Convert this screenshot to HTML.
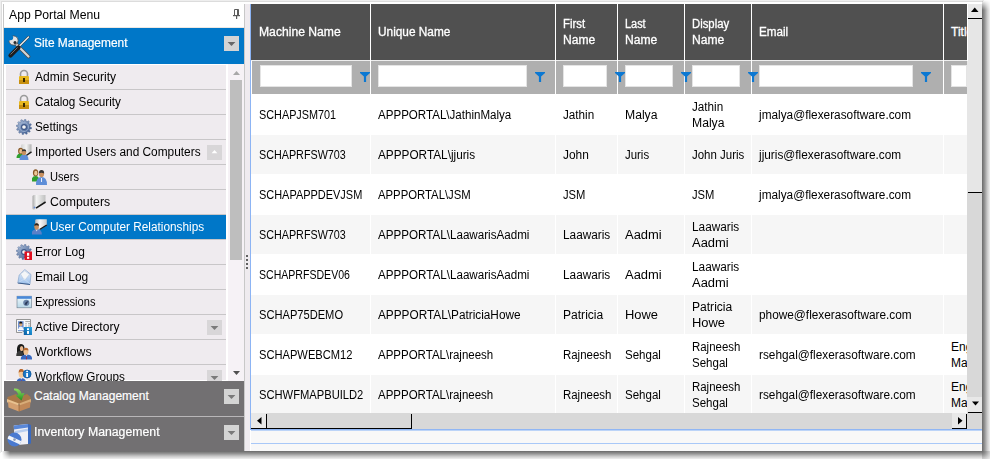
<!DOCTYPE html>
<html><head><meta charset="utf-8"><style>
html,body{margin:0;padding:0;}
body{width:990px;height:459px;position:relative;overflow:hidden;background:#fff;font-family:"Liberation Sans", sans-serif;font-size:12px;}
body div, body svg{position:absolute;}
.t{white-space:nowrap;line-height:16px;height:16px;}
</style></head><body>
<div style="left:0px;top:0px;width:984px;height:1px;background:#eeeeee;"></div>
<div style="left:0px;top:0px;width:1px;height:453px;background:#eeeeee;"></div>
<div style="left:1px;top:1px;width:982px;height:1px;background:#dcdcdc;"></div>
<div style="left:1px;top:1px;width:1px;height:451px;background:#dddddd;"></div>
<div style="left:982px;top:0px;width:8px;height:451px;background:linear-gradient(to right,#6a6a6a,#909090 30%,#c8c8c8 65%,#f0f0f0);-webkit-mask-image:linear-gradient(to bottom,transparent 0px,#000 10px)"></div>
<div style="left:0px;top:451px;width:982px;height:8px;background:linear-gradient(to bottom,#6a6a6a,#909090 30%,#c8c8c8 65%,#f0f0f0);-webkit-mask-image:linear-gradient(to right,transparent 2px,#000 10px)"></div>
<div style="left:982px;top:451px;width:8px;height:8px;background:radial-gradient(circle at 0 0,#6a6a6a,#909090 30%,#c8c8c8 65%,#f0f0f0 100%)"></div>
<div style="left:2px;top:2px;width:2px;height:449px;background:#ffffff;"></div>
<div style="left:3px;top:4px;width:1px;height:200px;background:linear-gradient(to bottom,#c4c4c4,#d8d8d8 50%,#ffffff)"></div>
<div style="left:4px;top:2px;width:240px;height:26px;background:#ffffff;"></div>
<div class="t" style="left:9px;top:7px;color:#000000;font-size:12px;font-weight:normal;transform:scaleX(1.0182);transform-origin:0 0;">App Portal Menu</div>
<svg style="left:232px;top:8px" width="10" height="12" viewBox="0 0 10 12"><path d="M2.5 1.5h4v6h-4z" fill="none" stroke="#5c5c5c" stroke-width="1"/><rect x="5" y="1.5" width="1.5" height="6" fill="#5c5c5c"/><rect x="1" y="7" width="7" height="1.2" fill="#5c5c5c"/><rect x="4" y="8" width="1.2" height="3" fill="#5c5c5c"/></svg>
<div style="left:4px;top:27px;width:240px;height:1px;background:#ece8e4;"></div>
<div style="left:4px;top:28px;width:240px;height:36px;background:#0077c8;"></div>
<div class="t" style="left:34px;top:35px;color:#ffffff;font-size:12px;font-weight:normal;transform:scaleX(0.9936);transform-origin:0 0;-webkit-text-stroke:0.2px #fff;">Site Management</div>
<svg style="left:7px;top:35px" width="24" height="24" viewBox="0 0 24 24"><line x1="9" y1="9" x2="21.5" y2="21.5" stroke="#4a4a4a" stroke-width="3.6" stroke-linecap="round"/><line x1="9" y1="9" x2="21.5" y2="21.5" stroke="#d4d4d4" stroke-width="2.2" stroke-linecap="round"/><line x1="21.5" y1="2" x2="12" y2="11.5" stroke="#3a3a3a" stroke-width="2.4" stroke-linecap="round"/><line x1="21.5" y1="2" x2="12" y2="11.5" stroke="#f0f0f0" stroke-width="1.3" stroke-linecap="round"/><line x1="11.5" y1="12.5" x2="3.5" y2="20.5" stroke="#1e1e1e" stroke-width="4.2" stroke-linecap="round"/><line x1="10.5" y1="12.5" x2="3.5" y2="19.5" stroke="#8a8a8a" stroke-width="0.8"/><circle cx="6.5" cy="5.5" r="4.6" fill="#e4e4e4" stroke="#505050" stroke-width="0.8"/><circle cx="3.6" cy="2.6" r="2.6" fill="#0077c8"/><path d="M1 5.5 L4.5 1.5" stroke="#0077c8" stroke-width="2.2"/><circle cx="8" cy="7.5" r="1.5" fill="#2a2a2a"/></svg>
<div style="left:224px;top:36px;width:15px;height:15px;background:#d4d4d4;"></div>
<svg style="left:224px;top:36px" width="15" height="15"><path d="M3.6 6H11.4L7.5 10.1z" fill="#686868"/></svg>
<div style="left:4px;top:64px;width:240px;height:317px;background:#ffffff;"></div>
<div style="left:6px;top:65px;width:220px;height:315px;background:#efebef;"></div>
<div style="left:6px;top:89px;width:220px;height:1px;background:#c8c6c8;"></div>
<svg style="left:16px;top:69px" width="16" height="16" viewBox="0 0 16 16"><rect x="4.5" y="1.5" width="7" height="8" rx="3.5" fill="none" stroke="#9a9a9a" stroke-width="1.6"/><rect x="3" y="7" width="10" height="8" rx="1" fill="#e8b820"/><rect x="3" y="11" width="10" height="4" fill="#c89010"/><rect x="7" y="9" width="2" height="4" fill="#3a2a00"/></svg>
<div class="t" style="left:35px;top:69px;color:#000000;font-size:12px;font-weight:normal;transform:scaleX(1.005);transform-origin:0 0;">Admin Security</div>
<div style="left:6px;top:114px;width:220px;height:1px;background:#c8c6c8;"></div>
<svg style="left:16px;top:94px" width="16" height="16" viewBox="0 0 16 16"><rect x="4.5" y="1.5" width="7" height="8" rx="3.5" fill="none" stroke="#9a9a9a" stroke-width="1.6"/><rect x="3" y="7" width="10" height="8" rx="1" fill="#e8b820"/><rect x="3" y="11" width="10" height="4" fill="#c89010"/><rect x="7" y="9" width="2" height="4" fill="#3a2a00"/></svg>
<div class="t" style="left:35px;top:94px;color:#000000;font-size:12px;font-weight:normal;transform:scaleX(0.9751);transform-origin:0 0;">Catalog Security</div>
<div style="left:6px;top:139px;width:220px;height:1px;background:#c8c6c8;"></div>
<svg style="left:16px;top:119px" width="16" height="16" viewBox="0 0 16 16"><defs><linearGradient id="gg1" x1="0" y1="0" x2="1" y2="1"><stop offset="0" stop-color="#b8c8e0"/><stop offset="1" stop-color="#2e4e86"/></linearGradient></defs><path d="M14.00 8.00L15.58 8.60L15.34 9.97L13.66 10.00L13.20 11.00L14.26 12.30L13.37 13.37L11.90 12.56L11.00 13.20L11.27 14.86L9.97 15.34L9.09 13.90L8.00 14.00L7.40 15.58L6.03 15.34L6.00 13.66L5.00 13.20L3.70 14.26L2.63 13.37L3.44 11.90L2.80 11.00L1.14 11.27L0.66 9.97L2.10 9.09L2.00 8.00L0.42 7.40L0.66 6.03L2.34 6.00L2.80 5.00L1.74 3.70L2.63 2.63L4.10 3.44L5.00 2.80L4.73 1.14L6.03 0.66L6.91 2.10L8.00 2.00L8.60 0.42L9.97 0.66L10.00 2.34L11.00 2.80L12.30 1.74L13.37 2.63L12.56 4.10L13.20 5.00L14.86 4.73L15.34 6.03L13.90 6.91Z" fill="url(#gg1)" stroke="#4a6490" stroke-width="0.5"/><circle cx="8" cy="8" r="4.6" fill="none" stroke="#9ab0d0" stroke-width="0.8"/><circle cx="8" cy="8" r="2.4" fill="#f4f4f4" stroke="#3a5486" stroke-width="1.1"/></svg>
<div class="t" style="left:35px;top:119px;color:#000000;font-size:12px;font-weight:normal;transform:scaleX(0.9811);transform-origin:0 0;">Settings</div>
<div style="left:6px;top:164px;width:220px;height:1px;background:#c8c6c8;"></div>
<svg style="left:16px;top:144px" width="16" height="16" viewBox="0 0 16 16"><defs><linearGradient id="gc1" x1="0" y1="0" x2="1" y2="0"><stop offset="0" stop-color="#d0d0d0"/><stop offset="0.5" stop-color="#f4f4f4"/><stop offset="1" stop-color="#b0b0b0"/></linearGradient></defs><path d="M5 1.5 Q5 0.3 6.5 0.3 L15.5 0.3 L15.5 8 L10 12 L5 12 Z" fill="url(#gc1)"/><path d="M9.5 12 L15.5 7.8" stroke="#1a1a1a" stroke-width="1.5"/><path d="M0.5 14 Q0.5 9.5 4.5 9.5 Q8 9.5 8 13 L8 14 Z" fill="#2ea02e"/><ellipse cx="4.6" cy="7" rx="2.5" ry="3.2" fill="#8a5a2a"/><ellipse cx="4.8" cy="7.2" rx="1.5" ry="2.2" fill="#e8c090"/><path d="M3.5 16 Q3.5 10.5 8 10.5 Q12.5 10.5 12.5 16 Z" fill="#5e8ed8"/><ellipse cx="8" cy="8.3" rx="2.3" ry="2.9" fill="#c89060"/><path d="M5.7 7.6 Q5.8 5.2 8 5.2 Q10.3 5.2 10.3 7.6 Q8 6.5 5.7 7.6Z" fill="#333"/></svg>
<div class="t" style="left:35px;top:144px;color:#000000;font-size:12px;font-weight:normal;transform:scaleX(0.9893);transform-origin:0 0;">Imported Users and Computers</div>
<div style="left:207px;top:145px;width:15px;height:15px;background:#d8d6d8;"></div>
<svg style="left:207px;top:145px" width="15" height="15"><path d="M4.6 8.2H10.4L7.5 4.9z" fill="#ffffff"/></svg>
<div style="left:6px;top:189px;width:220px;height:1px;background:#c8c6c8;"></div>
<svg style="left:32px;top:169px" width="16" height="16" viewBox="0 0 16 16"><path d="M-0.5 12.5 Q-0.5 7 3.5 7 Q7.5 7 7.5 12.5 Z" fill="#2ea02e"/><ellipse cx="3.6" cy="3.8" rx="2.7" ry="3.5" fill="#8a5a2a"/><ellipse cx="3.8" cy="4.2" rx="1.6" ry="2.4" fill="#ecc898"/><path d="M4 16 Q4 8 9.5 8 Q15 8 15 16 Z" fill="#5e8ed8"/><path d="M9.5 9 L9.5 13" stroke="#e8eef8" stroke-width="1"/><ellipse cx="9.5" cy="4.8" rx="2.6" ry="3.4" fill="#c89060"/><path d="M6.9 4.2 Q7 1 9.5 1 Q12.2 1 12.2 4.4 Q9.5 3 6.9 4.2Z" fill="#333"/></svg>
<div class="t" style="left:50px;top:169px;color:#000000;font-size:12px;font-weight:normal;transform:scaleX(0.927);transform-origin:0 0;">Users</div>
<div style="left:6px;top:214px;width:220px;height:1px;background:#c8c6c8;"></div>
<svg style="left:32px;top:194px" width="16" height="16" viewBox="0 0 16 16"><defs><linearGradient id="gc2" x1="0" y1="0" x2="1" y2="0"><stop offset="0" stop-color="#a8a8a8"/><stop offset="0.3" stop-color="#f4f4f4"/><stop offset="1" stop-color="#c0c0c0"/></linearGradient></defs><path d="M0.5 2.5 Q0.5 1 2 1 L13.5 1 L13.5 8.2 L3.5 15.5 L1.5 15.5 Q0.5 15.5 0.5 14.5 Z" fill="url(#gc2)"/><path d="M4 14.2 L13.6 8" stroke="#181818" stroke-width="1.6"/><circle cx="2.5" cy="13.5" r="0.9" fill="#6a90d8"/></svg>
<div class="t" style="left:50px;top:194px;color:#000000;font-size:12px;font-weight:normal;transform:scaleX(1.0244);transform-origin:0 0;">Computers</div>
<div style="left:6px;top:215px;width:220px;height:25px;background:#0077c8;"></div>
<div style="left:6px;top:239px;width:220px;height:1px;background:#c8c6c8;"></div>
<svg style="left:32px;top:219px" width="16" height="16" viewBox="0 0 16 16"><defs><linearGradient id="gc3" x1="0" y1="0" x2="1" y2="0"><stop offset="0" stop-color="#b8b8b8"/><stop offset="0.4" stop-color="#f8f8f8"/><stop offset="1" stop-color="#c8c8c8"/></linearGradient></defs><path d="M3.2 1.5 Q3.2 0.2 4.5 0.2 L14.8 0.2 L14.8 6.3 L8 10.8 L3.2 10.8 Z" fill="url(#gc3)"/><path d="M7.6 10.5 L14.8 6" stroke="#151515" stroke-width="1.4"/><path d="M-0.5 15.5 Q-0.5 10.2 4.7 10.2 Q9.9 10.2 9.9 15.5Z" fill="#5a80c8"/><path d="M3.8 10.4 L4.7 12.5 L5.6 10.4Z" fill="#e8eef8"/><ellipse cx="4.6" cy="7.5" rx="2.3" ry="3.2" fill="#c89060"/><path d="M2.3 6.8 Q2.3 4.2 4.6 4.2 Q6.9 4.2 6.9 6.8 Q4.6 5.6 2.3 6.8Z" fill="#222"/></svg>
<div class="t" style="left:50px;top:219px;color:#ffffff;font-size:12px;font-weight:normal;transform:scaleX(0.9832);transform-origin:0 0;">User Computer Relationships</div>
<div style="left:6px;top:264px;width:220px;height:1px;background:#c8c6c8;"></div>
<svg style="left:16px;top:244px" width="16" height="16" viewBox="0 0 16 16"><defs><linearGradient id="gg2" x1="0" y1="0" x2="1" y2="1"><stop offset="0" stop-color="#b8c8e0"/><stop offset="1" stop-color="#2e4e86"/></linearGradient></defs><path d="M14.00 8.00L15.58 8.60L15.34 9.97L13.66 10.00L13.20 11.00L14.26 12.30L13.37 13.37L11.90 12.56L11.00 13.20L11.27 14.86L9.97 15.34L9.09 13.90L8.00 14.00L7.40 15.58L6.03 15.34L6.00 13.66L5.00 13.20L3.70 14.26L2.63 13.37L3.44 11.90L2.80 11.00L1.14 11.27L0.66 9.97L2.10 9.09L2.00 8.00L0.42 7.40L0.66 6.03L2.34 6.00L2.80 5.00L1.74 3.70L2.63 2.63L4.10 3.44L5.00 2.80L4.73 1.14L6.03 0.66L6.91 2.10L8.00 2.00L8.60 0.42L9.97 0.66L10.00 2.34L11.00 2.80L12.30 1.74L13.37 2.63L12.56 4.10L13.20 5.00L14.86 4.73L15.34 6.03L13.90 6.91Z" fill="url(#gg2)" stroke="#4a6490" stroke-width="0.5"/><circle cx="8" cy="8" r="2.4" fill="#f4f4f4" stroke="#3a5486" stroke-width="1.1"/><rect x="8.5" y="7.5" width="7.5" height="8.5" fill="#e01020"/><rect x="11" y="8.8" width="2.2" height="3" fill="#fff"/><rect x="11" y="12.8" width="2.2" height="2" fill="#fff"/></svg>
<div class="t" style="left:35px;top:244px;color:#000000;font-size:12px;font-weight:normal;transform:scaleX(0.9968);transform-origin:0 0;">Error Log</div>
<div style="left:6px;top:289px;width:220px;height:1px;background:#c8c6c8;"></div>
<svg style="left:16px;top:269px" width="16" height="16" viewBox="0 0 16 16"><defs><linearGradient id="ge1" x1="0" y1="0" x2="0" y2="1"><stop offset="0" stop-color="#e8f0fa"/><stop offset="1" stop-color="#9cc0ec"/></linearGradient></defs><path d="M1.8 13.8 L3.2 6 L8.8 0.5 L15 5.5 L14 15.3 Z" fill="url(#ge1)" stroke="#7a9cc8" stroke-width="0.6"/><path d="M4.5 5 L8.8 1.8 L13.5 5.5 L8.5 11.5 Z" fill="#f4f6f8" stroke="#b0c0d8" stroke-width="0.5"/><path d="M2 13.8 L8.3 10 L14 15" fill="none" stroke="#c8dcf4" stroke-width="0.8"/><path d="M1.8 14 L14 15.5" stroke="#3a5a8a" stroke-width="1"/></svg>
<div class="t" style="left:35px;top:269px;color:#000000;font-size:12px;font-weight:normal;transform:scaleX(0.9966);transform-origin:0 0;">Email Log</div>
<div style="left:6px;top:314px;width:220px;height:1px;background:#c8c6c8;"></div>
<svg style="left:16px;top:294px" width="16" height="16" viewBox="0 0 16 16"><defs><linearGradient id="gx1" x1="0" y1="0" x2="0" y2="1"><stop offset="0" stop-color="#f0f8fc"/><stop offset="1" stop-color="#b8d8e8"/></linearGradient></defs><rect x="1" y="2.2" width="14.6" height="11.6" fill="url(#gx1)" stroke="#6a7a8a" stroke-width="0.6"/><rect x="1" y="2.2" width="14.6" height="2.6" fill="#4a88d8"/><circle cx="10.3" cy="8.8" r="3.1" fill="#6a84a8"/><path d="M8.5 10.5 Q10 6.5 12.5 7.5 Q11 8.5 10.5 11 Z" fill="#2a3a5a"/></svg>
<div class="t" style="left:35px;top:294px;color:#000000;font-size:12px;font-weight:normal;transform:scaleX(0.9252);transform-origin:0 0;">Expressions</div>
<div style="left:6px;top:339px;width:220px;height:1px;background:#c8c6c8;"></div>
<svg style="left:16px;top:319px" width="16" height="16" viewBox="0 0 16 16"><path d="M0.5 0.5 H14.5 V13.5 H9 L8 12.5 H7 L6 13.5 H0.5 Z" fill="#fafafa" stroke="#8a8a8a" stroke-width="0.9"/><rect x="2" y="2.2" width="5.6" height="7.8" fill="#7090d0"/><ellipse cx="4.8" cy="5.2" rx="1.6" ry="2" fill="#d8a878"/><path d="M3.2 4.6 Q3.3 2.6 4.8 2.6 Q6.4 2.6 6.4 4.6Z" fill="#111"/><path d="M2.4 10 Q2.5 7.5 4.8 7.5 Q7.2 7.5 7.2 10Z" fill="#f0f4fc"/><rect x="2" y="11.2" width="6" height="0.9" fill="#7090d0"/><path d="M9.3 2.6H14M9.3 4.8H10.8M12 4.8H14M9.3 7H10.8M12 7H14" stroke="#9a9a9a" stroke-width="0.9"/><defs><linearGradient id="ga1" x1="0" y1="1" x2="1" y2="0"><stop offset="0" stop-color="#0a5aa0"/><stop offset="1" stop-color="#28a8e8"/></linearGradient></defs><rect x="7.8" y="8" width="8.2" height="8" fill="url(#ga1)"/><rect x="11" y="9.3" width="2" height="1.7" fill="#fff"/><rect x="11" y="11.9" width="2" height="3" fill="#fff"/></svg>
<div class="t" style="left:35px;top:319px;color:#000000;font-size:12px;font-weight:normal;transform:scaleX(1.0048);transform-origin:0 0;">Active Directory</div>
<div style="left:207px;top:320px;width:15px;height:15px;background:#d8d6d8;"></div>
<svg style="left:207px;top:320px" width="15" height="15"><path d="M3.6 6H11.4L7.5 10.1z" fill="#7a7a7a"/></svg>
<div style="left:6px;top:364px;width:220px;height:1px;background:#c8c6c8;"></div>
<svg style="left:16px;top:344px" width="16" height="16" viewBox="0 0 16 16"><path d="M1 7 Q0.5 0 5 0 Q9 0 8.5 6 L8 12 H1Z" fill="#1a1a1a"/><ellipse cx="5.6" cy="4.6" rx="1.7" ry="2.6" fill="#e8b890"/><path d="M0.2 12 Q0.2 7 4 7 Q7.2 7 7.2 12Z" fill="#3a3a3a"/><path d="M4.7 15.5 Q4.7 10.5 10.5 10.5 Q16.2 10.5 16.2 15.5Z" fill="#3868c0"/><path d="M9.3 10.7 L10.5 12 L11.7 10.7Z" fill="#fff"/><path d="M10.5 11.5 L10 15.3 H11Z" fill="#c81818"/><ellipse cx="9.9" cy="7.4" rx="2.5" ry="3.4" fill="#f0c090"/><path d="M7.4 6.6 Q7.4 3.8 9.9 3.8 Q12.5 3.8 12.4 6.6 Q10 5.2 7.4 6.6Z" fill="#b86830"/></svg>
<div class="t" style="left:35px;top:344px;color:#000000;font-size:12px;font-weight:normal;transform:scaleX(1.0259);transform-origin:0 0;">Workflows</div>
<svg style="left:16px;top:369px" width="16" height="16" viewBox="0 0 16 16"><path d="M0 16 Q0 9 5.3 9 Q10.5 9 10.5 16Z" fill="#3868c0"/><path d="M4.3 9.2 L5.3 10.5 L6.3 9.2Z" fill="#fff"/><path d="M5.3 10 L4.6 16 H6Z" fill="#c81818"/><ellipse cx="5.3" cy="4.6" rx="2.7" ry="4.2" fill="#f4c898"/><path d="M2.6 3.8 Q2.6 -0.2 5.3 -0.2 Q8 -0.2 8 3.8 Q5.3 1.8 2.6 3.8Z" fill="#b86830"/><circle cx="11.1" cy="5" r="4" fill="#1a78c8" stroke="#0a4e90" stroke-width="0.7"/><rect x="10.2" y="1.8" width="1.8" height="1.3" fill="#fff"/><rect x="10.2" y="4" width="1.8" height="4" fill="#fff"/></svg>
<div class="t" style="left:35px;top:369px;color:#000000;font-size:12px;font-weight:normal;transform:scaleX(0.9787);transform-origin:0 0;">Workflow Groups</div>
<div style="left:207px;top:370px;width:15px;height:15px;background:#d8d6d8;"></div>
<svg style="left:207px;top:370px" width="15" height="15"><path d="M3.6 6H11.4L7.5 10.1z" fill="#7a7a7a"/></svg>
<div style="left:226px;top:64px;width:2px;height:317px;background:#ffffff;"></div>
<div style="left:228px;top:64px;width:16px;height:317px;background:#f6f2f6;"></div>
<svg style="left:228px;top:64px" width="16" height="317"><path d="M5 11h7l-3.5-4z" fill="#a8a8a8"/><path d="M5 307h7l-3.5 4z" fill="#505050"/></svg>
<div style="left:230px;top:80px;width:12px;height:180px;background:#bebebe;"></div>
<div style="left:4px;top:381px;width:240px;height:70px;background:#727072;"></div>
<div style="left:4px;top:416px;width:240px;height:1px;background:#b8b6b8;"></div>
<div class="t" style="left:34px;top:388px;color:#ffffff;font-size:12px;font-weight:normal;-webkit-text-stroke:0.2px #fff;">Catalog Management</div>
<div class="t" style="left:34px;top:424px;color:#ffffff;font-size:12px;font-weight:normal;transform:scaleX(1.023);transform-origin:0 0;-webkit-text-stroke:0.2px #fff;">Inventory Management</div>
<div style="left:224px;top:389px;width:15px;height:15px;background:#d4d4d4;"></div>
<svg style="left:224px;top:389px" width="15" height="15"><path d="M3.6 6H11.4L7.5 10.1z" fill="#7a7a7a"/></svg>
<div style="left:224px;top:425px;width:15px;height:15px;background:#d4d4d4;"></div>
<svg style="left:224px;top:425px" width="15" height="15"><path d="M3.6 6H11.4L7.5 10.1z" fill="#7a7a7a"/></svg>
<svg style="left:7px;top:388px" width="24" height="24" viewBox="0 0 24 24"><defs><linearGradient id="gar" x1="0" y1="0" x2="0" y2="1"><stop offset="0" stop-color="#90e060"/><stop offset="1" stop-color="#209020"/></linearGradient></defs><path d="M0.5 9 L9 6 L12 9 L20 6 L23.5 9 L23.5 12.5 L12 16 L0.5 12.5 Z" fill="#a87848"/><path d="M7 0.5 Q13 0 14.5 5.5 L17.5 5 L14.5 12.5 L8.5 7.5 L11.2 6.8 Q10.5 3 7 2.2 Z" fill="url(#gar)"/><path d="M0 11 L12 15.5 L11 18.5 L-0.5 14 Z" fill="#e8c290"/><path d="M24 11 L12 15.5 L13 18.5 L24.5 14 Z" fill="#d8ac78"/><path d="M1 13.5 L12 17.5 L12 23.5 L1.5 19.5 Z" fill="#d4a070"/><path d="M12 17.5 L23.5 13.5 L23 19.5 L12 23.5 Z" fill="#c08858"/><path d="M12 15.5 V23.5" stroke="#8a5a30" stroke-width="0.6"/></svg>
<svg style="left:7px;top:424px" width="24" height="24" viewBox="0 0 24 24"><defs><clipPath id="cdc"><circle cx="7.5" cy="15.6" r="7"/></clipPath></defs><path d="M6.8 1.5 L21 0 L21 20 L8 21.2 Z" fill="#f0f0f6"/><path d="M6.8 1.5 L21 0 L21 3.5 L6.8 5.5 Z" fill="#5a88d8"/><path d="M8 7 L21 4.5 L21 7 L8 9.5 Z" fill="#b8cef0"/><path d="M21 0 L24 1 L24 19.5 L21 20 Z" fill="#3a6ac0"/><circle cx="7.5" cy="15.6" r="7" fill="#4a7ad0"/><path d="M0 10.5 L15 17.5 L15 21.5 L0 14.5 Z" fill="#f0f4fa" clip-path="url(#cdc)"/><circle cx="7.5" cy="15.6" r="1.3" fill="#8a9ab8"/></svg>
<div style="left:244px;top:4px;width:1px;height:447px;background:#c8c8c8;"></div>
<div style="left:245px;top:4px;width:5px;height:447px;background:#efebef;"></div>
<div style="left:246px;top:255px;width:2px;height:2px;background:#606060;"></div>
<div style="left:246px;top:259px;width:2px;height:2px;background:#606060;"></div>
<div style="left:246px;top:263px;width:2px;height:2px;background:#606060;"></div>
<div style="left:246px;top:267px;width:2px;height:2px;background:#606060;"></div>
<div style="left:250px;top:4px;width:1px;height:426px;background:#8cb4f4;"></div>
<div style="left:251px;top:4px;width:716px;height:56px;background:#505050;"></div>
<div style="left:251px;top:60px;width:716px;height:1px;background:#eeeeee;"></div>
<div style="left:251px;top:61px;width:716px;height:33px;background:#afafaf;"></div>
<div style="left:251px;top:94px;width:716px;height:319px;background:#ffffff;"></div>
<div style="left:251px;top:135px;width:716px;height:39px;background:#f6f6f6;"></div>
<div style="left:251px;top:215px;width:716px;height:39px;background:#f6f6f6;"></div>
<div style="left:251px;top:295px;width:716px;height:39px;background:#f6f6f6;"></div>
<div style="left:251px;top:375px;width:716px;height:39px;background:#f6f6f6;"></div>
<div style="left:370px;top:4px;width:1px;height:409px;background:#ffffff;"></div>
<div style="left:555px;top:4px;width:1px;height:409px;background:#ffffff;"></div>
<div style="left:617px;top:4px;width:1px;height:409px;background:#ffffff;"></div>
<div style="left:684px;top:4px;width:1px;height:409px;background:#ffffff;"></div>
<div style="left:751px;top:4px;width:1px;height:409px;background:#ffffff;"></div>
<div style="left:943px;top:4px;width:1px;height:409px;background:#ffffff;"></div>
<div style="left:251px;top:61px;width:1px;height:33px;background:#ffffff;"></div>
<div class="t" style="left:259px;top:24px;color:#ffffff;font-size:12px;font-weight:normal;transform:scaleX(1.0125);transform-origin:0 0;-webkit-text-stroke:0.3px #fff;">Machine Name</div>
<div class="t" style="left:378px;top:24px;color:#ffffff;font-size:12px;font-weight:normal;transform:scaleX(0.9865);transform-origin:0 0;-webkit-text-stroke:0.3px #fff;">Unique Name</div>
<div class="t" style="left:563px;top:16px;color:#ffffff;font-size:12px;font-weight:normal;transform:scaleX(0.9483);transform-origin:0 0;-webkit-text-stroke:0.3px #fff;">First</div>
<div class="t" style="left:563px;top:32px;color:#ffffff;font-size:12px;font-weight:normal;transform:scaleX(1.0069);transform-origin:0 0;-webkit-text-stroke:0.3px #fff;">Name</div>
<div class="t" style="left:625px;top:16px;color:#ffffff;font-size:12px;font-weight:normal;transform:scaleX(0.9091);transform-origin:0 0;-webkit-text-stroke:0.3px #fff;">Last</div>
<div class="t" style="left:625px;top:32px;color:#ffffff;font-size:12px;font-weight:normal;transform:scaleX(1.0069);transform-origin:0 0;-webkit-text-stroke:0.3px #fff;">Name</div>
<div class="t" style="left:692px;top:16px;color:#ffffff;font-size:12px;font-weight:normal;transform:scaleX(0.9438);transform-origin:0 0;-webkit-text-stroke:0.3px #fff;">Display</div>
<div class="t" style="left:692px;top:32px;color:#ffffff;font-size:12px;font-weight:normal;transform:scaleX(1.0069);transform-origin:0 0;-webkit-text-stroke:0.3px #fff;">Name</div>
<div class="t" style="left:759px;top:24px;color:#ffffff;font-size:12px;font-weight:normal;transform:scaleX(0.973);transform-origin:0 0;-webkit-text-stroke:0.3px #fff;">Email</div>
<div class="t" style="left:951px;top:24px;color:#ffffff;font-size:12px;font-weight:normal;-webkit-text-stroke:0.3px #fff;">Title</div>
<div style="left:260px;top:65px;width:92px;height:22px;background:#ffffff;box-shadow:inset 0 0 0 1px #e4e4e4;"></div>
<div style="left:378px;top:65px;width:149px;height:22px;background:#ffffff;box-shadow:inset 0 0 0 1px #e4e4e4;"></div>
<div style="left:563px;top:65px;width:44px;height:22px;background:#ffffff;box-shadow:inset 0 0 0 1px #e4e4e4;"></div>
<div style="left:625px;top:65px;width:48px;height:22px;background:#ffffff;box-shadow:inset 0 0 0 1px #e4e4e4;"></div>
<div style="left:692px;top:65px;width:48px;height:22px;background:#ffffff;box-shadow:inset 0 0 0 1px #e4e4e4;"></div>
<div style="left:759px;top:65px;width:154px;height:22px;background:#ffffff;box-shadow:inset 0 0 0 1px #e4e4e4;"></div>
<div style="left:951px;top:65px;width:16px;height:22px;background:#ffffff;box-shadow:inset 0 0 0 1px #e4e4e4;"></div>
<svg style="left:360px;top:72px" width="10" height="10"><path d="M0 0H10V1L6.1 4.4V10H3.9V4.4L0 1Z" fill="#0c78d2"/></svg>
<svg style="left:535px;top:72px" width="10" height="10"><path d="M0 0H10V1L6.1 4.4V10H3.9V4.4L0 1Z" fill="#0c78d2"/></svg>
<svg style="left:615px;top:72px" width="10" height="10"><path d="M0 0H10V1L6.1 4.4V10H3.9V4.4L0 1Z" fill="#0c78d2"/></svg>
<svg style="left:681px;top:72px" width="10" height="10"><path d="M0 0H10V1L6.1 4.4V10H3.9V4.4L0 1Z" fill="#0c78d2"/></svg>
<svg style="left:748px;top:72px" width="10" height="10"><path d="M0 0H10V1L6.1 4.4V10H3.9V4.4L0 1Z" fill="#0c78d2"/></svg>
<svg style="left:921px;top:72px" width="10" height="10"><path d="M0 0H10V1L6.1 4.4V10H3.9V4.4L0 1Z" fill="#0c78d2"/></svg>
<div style="left:251px;top:94px;width:716px;height:319px;overflow:hidden">
<div class="t" style="left:8px;top:13px;color:#000000;transform:scaleX(0.9038);transform-origin:0 0;">SCHAPJSM701</div>
<div class="t" style="left:127px;top:13px;color:#000000;transform:scaleX(0.9638);transform-origin:0 0;">APPPORTAL\JathinMalya</div>
<div class="t" style="left:312px;top:13px;color:#000000;transform:scaleX(0.9746);transform-origin:0 0;">Jathin</div>
<div class="t" style="left:374px;top:13px;color:#000000;transform:scaleX(1.0141);transform-origin:0 0;">Malya</div>
<div class="t" style="left:441px;top:5px;color:#000000;transform:scaleX(0.9746);transform-origin:0 0;">Jathin</div>
<div class="t" style="left:441px;top:21px;color:#000000;transform:scaleX(1.0141);transform-origin:0 0;">Malya</div>
<div class="t" style="left:508px;top:13px;color:#000000;transform:scaleX(0.9858);transform-origin:0 0;">jmalya@flexerasoftware.com</div>
<div class="t" style="left:8px;top:53px;color:#000000;transform:scaleX(0.8979);transform-origin:0 0;">SCHAPRFSW703</div>
<div class="t" style="left:127px;top:53px;color:#000000;transform:scaleX(0.9818);transform-origin:0 0;">APPPORTAL\jjuris</div>
<div class="t" style="left:312px;top:53px;color:#000000;transform:scaleX(0.9924);transform-origin:0 0;">John</div>
<div class="t" style="left:374px;top:53px;color:#000000;transform:scaleX(0.9508);transform-origin:0 0;">Juris</div>
<div class="t" style="left:441px;top:53px;color:#000000;transform:scaleX(0.9558);transform-origin:0 0;">John Juris</div>
<div class="t" style="left:508px;top:53px;color:#000000;transform:scaleX(0.9858);transform-origin:0 0;">jjuris@flexerasoftware.com</div>
<div class="t" style="left:8px;top:93px;color:#000000;transform:scaleX(0.9126);transform-origin:0 0;">SCHAPAPPDEVJSM</div>
<div class="t" style="left:127px;top:93px;color:#000000;transform:scaleX(0.9444);transform-origin:0 0;">APPPORTAL\JSM</div>
<div class="t" style="left:312px;top:93px;color:#000000;transform:scaleX(0.9322);transform-origin:0 0;">JSM</div>
<div class="t" style="left:441px;top:93px;color:#000000;transform:scaleX(0.9322);transform-origin:0 0;">JSM</div>
<div class="t" style="left:508px;top:93px;color:#000000;transform:scaleX(0.9858);transform-origin:0 0;">jmalya@flexerasoftware.com</div>
<div class="t" style="left:8px;top:133px;color:#000000;transform:scaleX(0.8979);transform-origin:0 0;">SCHAPRFSW703</div>
<div class="t" style="left:127px;top:133px;color:#000000;transform:scaleX(0.969);transform-origin:0 0;">APPPORTAL\LaawarisAadmi</div>
<div class="t" style="left:312px;top:133px;color:#000000;transform:scaleX(0.9839);transform-origin:0 0;">Laawaris</div>
<div class="t" style="left:374px;top:133px;color:#000000;transform:scaleX(1.0794);transform-origin:0 0;">Aadmi</div>
<div class="t" style="left:441px;top:125px;color:#000000;transform:scaleX(0.9839);transform-origin:0 0;">Laawaris</div>
<div class="t" style="left:441px;top:141px;color:#000000;transform:scaleX(1.0794);transform-origin:0 0;">Aadmi</div>
<div class="t" style="left:8px;top:173px;color:#000000;transform:scaleX(0.8797);transform-origin:0 0;">SCHAPRFSDEV06</div>
<div class="t" style="left:127px;top:173px;color:#000000;transform:scaleX(0.969);transform-origin:0 0;">APPPORTAL\LaawarisAadmi</div>
<div class="t" style="left:312px;top:173px;color:#000000;transform:scaleX(0.9839);transform-origin:0 0;">Laawaris</div>
<div class="t" style="left:374px;top:173px;color:#000000;transform:scaleX(1.0794);transform-origin:0 0;">Aadmi</div>
<div class="t" style="left:441px;top:165px;color:#000000;transform:scaleX(0.9839);transform-origin:0 0;">Laawaris</div>
<div class="t" style="left:441px;top:181px;color:#000000;transform:scaleX(1.0794);transform-origin:0 0;">Aadmi</div>
<div class="t" style="left:8px;top:213px;color:#000000;transform:scaleX(0.9266);transform-origin:0 0;">SCHAP75DEMO</div>
<div class="t" style="left:127px;top:213px;color:#000000;transform:scaleX(0.9834);transform-origin:0 0;">APPPORTAL\PatriciaHowe</div>
<div class="t" style="left:312px;top:213px;color:#000000;transform:scaleX(1.0054);transform-origin:0 0;">Patricia</div>
<div class="t" style="left:374px;top:213px;color:#000000;transform:scaleX(1.075);transform-origin:0 0;">Howe</div>
<div class="t" style="left:441px;top:205px;color:#000000;transform:scaleX(1.0054);transform-origin:0 0;">Patricia</div>
<div class="t" style="left:441px;top:221px;color:#000000;transform:scaleX(1.075);transform-origin:0 0;">Howe</div>
<div class="t" style="left:508px;top:213px;color:#000000;transform:scaleX(0.9858);transform-origin:0 0;">phowe@flexerasoftware.com</div>
<div class="t" style="left:8px;top:253px;color:#000000;transform:scaleX(0.928);transform-origin:0 0;">SCHAPWEBCM12</div>
<div class="t" style="left:127px;top:253px;color:#000000;transform:scaleX(0.958);transform-origin:0 0;">APPPORTAL\rajneesh</div>
<div class="t" style="left:312px;top:253px;color:#000000;transform:scaleX(0.9529);transform-origin:0 0;">Rajneesh</div>
<div class="t" style="left:374px;top:253px;color:#000000;transform:scaleX(0.961);transform-origin:0 0;">Sehgal</div>
<div class="t" style="left:441px;top:245px;color:#000000;transform:scaleX(0.9529);transform-origin:0 0;">Rajneesh</div>
<div class="t" style="left:441px;top:261px;color:#000000;transform:scaleX(0.961);transform-origin:0 0;">Sehgal</div>
<div class="t" style="left:508px;top:253px;color:#000000;transform:scaleX(0.9858);transform-origin:0 0;">rsehgal@flexerasoftware.com</div>
<div class="t" style="left:700px;top:245px;color:#000000;">Engineering</div>
<div class="t" style="left:700px;top:261px;color:#000000;">Manager</div>
<div class="t" style="left:8px;top:293px;color:#000000;transform:scaleX(0.9315);transform-origin:0 0;">SCHWFMAPBUILD2</div>
<div class="t" style="left:127px;top:293px;color:#000000;transform:scaleX(0.958);transform-origin:0 0;">APPPORTAL\rajneesh</div>
<div class="t" style="left:312px;top:293px;color:#000000;transform:scaleX(0.9529);transform-origin:0 0;">Rajneesh</div>
<div class="t" style="left:374px;top:293px;color:#000000;transform:scaleX(0.961);transform-origin:0 0;">Sehgal</div>
<div class="t" style="left:441px;top:285px;color:#000000;transform:scaleX(0.9529);transform-origin:0 0;">Rajneesh</div>
<div class="t" style="left:441px;top:301px;color:#000000;transform:scaleX(0.961);transform-origin:0 0;">Sehgal</div>
<div class="t" style="left:508px;top:293px;color:#000000;transform:scaleX(0.9858);transform-origin:0 0;">rsehgal@flexerasoftware.com</div>
<div class="t" style="left:700px;top:285px;color:#000000;">Engineering</div>
<div class="t" style="left:700px;top:301px;color:#000000;">Manager</div>
</div>
<div style="left:967px;top:4px;width:15px;height:409px;background:#d8d8d8;"></div>
<div style="left:967px;top:4px;width:15px;height:14px;background:#e8e8e8;"></div>
<div style="left:967px;top:19px;width:15px;height:173px;background:#e6e6e6;"></div>
<div style="left:967px;top:397px;width:15px;height:15px;background:#e8e8e8;"></div>
<div style="left:967px;top:4px;width:1px;height:57px;background:#ffffff;"></div>
<div style="left:968px;top:18px;width:14px;height:1px;background:#000000;"></div>
<div style="left:968px;top:192px;width:14px;height:1px;background:#000000;"></div>
<div style="left:968px;top:412px;width:14px;height:1px;background:#000000;"></div>
<svg style="left:967px;top:4px" width="15" height="409"><path d="M4 8h7.5L7.75 3.5z" fill="#000"/><path d="M5 397.5h7l-3.5 4z" fill="#000"/></svg>
<div style="left:251px;top:413px;width:716px;height:16px;background:#d8d8d8;"></div>
<div style="left:251px;top:413px;width:15px;height:15px;background:#e8e8e8;"></div>
<div style="left:266px;top:414px;width:1px;height:15px;background:#000;"></div>
<div style="left:251px;top:428px;width:16px;height:1px;background:#000;"></div>
<div style="left:267px;top:413px;width:144px;height:15px;background:#d8d8d8;"></div>
<div style="left:411px;top:414px;width:1px;height:15px;background:#000;"></div>
<div style="left:267px;top:428px;width:145px;height:1px;background:#000;"></div>
<div style="left:952px;top:413px;width:15px;height:15px;background:#e8e8e8;"></div>
<div style="left:966px;top:414px;width:1px;height:15px;background:#000;"></div>
<div style="left:952px;top:428px;width:15px;height:1px;background:#000;"></div>
<div style="left:967px;top:413px;width:15px;height:16px;background:#d8d8d8;"></div>
<svg style="left:251px;top:413px" width="716" height="16"><path d="M10.5 4v7.5L6 7.75z" fill="#000"/><path d="M707 4v7.5l4.5-3.75z" fill="#000"/></svg>
<div style="left:251px;top:429px;width:731px;height:22px;background:#f8f8f8;"></div>
<div style="left:250px;top:429px;width:732px;height:1px;background:#90b6f4;"></div>
<div style="left:251px;top:430px;width:731px;height:1px;background:#bcd4f8;"></div>
<div style="left:251px;top:443px;width:731px;height:1px;background:#a8c8f8;"></div>
</body></html>
